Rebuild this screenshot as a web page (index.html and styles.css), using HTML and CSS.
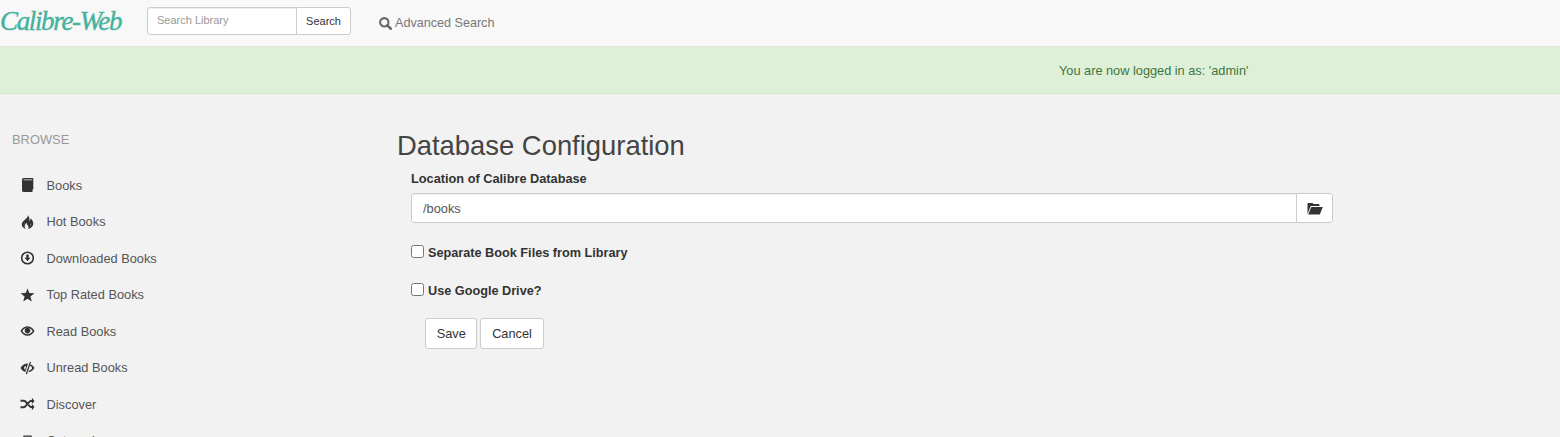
FILE: index.html
```html
<!DOCTYPE html>
<html lang="en">
<head>
<meta charset="utf-8">
<title>Calibre-Web | Database Configuration</title>
<link rel="stylesheet" href="styles.css">
</head>
<body>
<header class="navbar">
  <a class="brand">Calibre-Web</a>
  <form class="search">
    <input class="search-input" type="text" placeholder="Search Library">
    <button class="search-btn" type="button">Search</button>
  </form>
  <a class="adv">
    <svg class="adv-icon" viewBox="0 0 14 14"><circle cx="5.700" cy="5.700" r="4.500" fill="none" stroke="currentColor" stroke-width="2.200"/><path d="M9 9 12.600 12.600" stroke="currentColor" stroke-width="2.800" stroke-linecap="round"/></svg>
    Advanced Search
  </a>
</header>
<div class="alert">You are now logged in as: 'admin'</div>
<div class="page">
  <aside class="sidebar">
    <div class="browse">BROWSE</div>
    <ul class="nav">
      <li><svg class="ic" viewBox="0 0 14 14"><path d="M1.500 1.800C1.500.8 2.200 0 3.200 0H12.800V11.400H11.800V1.600H3.400C2.800 1.600 2.800 2.300 3.400 2.300H12V14H3.200C2.200 14 1.500 13.200 1.500 12.200Z" fill="currentColor"/></svg>Books</li>
      <li><svg class="ic" viewBox="0 0 14 14"><path fill-rule="evenodd" d="M6.800 0C8 2 6 3.300 4.300 4.700 2.300 6.300 1 7.900 1.300 10 1.500 11.700 3 13.200 5.300 14 3.600 11.900 3.700 9.700 6.200 7.400 6 9.200 7.300 10 7.900 11.200 8.300 12.200 8 13.200 7.500 14 10.500 13.400 12.800 11.400 12.800 8.600 12.800 6.100 11.300 4.800 10.200 3.300 10.100 4.800 9.700 5.700 8.900 6.300 9.400 3.800 8.700 1.500 6.800 0ZM4.900 6.700C3.900 7.700 3.200 8.800 3.500 10.200 3.400 8.800 4 7.700 4.900 6.700ZM9.900 8.300C10.400 9.200 10.500 10.300 10 11.200 11 10.400 11 9.300 9.900 8.300Z" fill="currentColor"/></svg>Hot Books</li>
      <li><svg class="ic" viewBox="0 0 14 14"><circle cx="7" cy="7" r="5.800" fill="none" stroke="currentColor" stroke-width="1.600"/><path d="M5.800 3.500H8.200V6.800H10L7 10.300 4 6.800H5.800Z" fill="currentColor"/></svg>Downloaded Books</li>
      <li><svg class="ic" viewBox="0 0 14 14"><path d="M7 .4 8.800 5 13.900 5.300 9.900 8.500 11.300 13.500 7 10.700 2.700 13.500 4.100 8.500.1 5.300 5.200 5Z" fill="currentColor"/></svg>Top Rated Books</li>
      <li><svg class="ic" viewBox="0 0 14 14"><path fill-rule="evenodd" d="M7 2.200C10.300 2.200 12.800 4.600 14 7 12.800 9.400 10.300 11.800 7 11.800S1.200 9.400 0 7C1.200 4.600 3.700 2.200 7 2.200ZM7 3.700C4.700 3.700 2.900 5.200 1.800 7 2.900 8.800 4.700 10.300 7 10.300S11.100 8.800 12.200 7C11.100 5.200 9.300 3.700 7 3.700Z" fill="currentColor"/><circle cx="7" cy="6.600" r="2.800" fill="currentColor"/></svg>Read Books</li>
      <li><svg class="ic" viewBox="0 0 14 14"><path fill-rule="evenodd" d="M7.600 2.500 4.700 11.100C2.700 10.300 1 8.800 0 7 1.300 4.600 3.900 2.500 7.600 2.500ZM5 5C4.100 5.600 3.600 6.200 3.600 7 3.600 7.700 4 8.300 4.600 8.700L5.700 5.400Z" fill="currentColor"/><path d="M9.400 .8 10.600 1.200 6.400 13.200 5.200 12.800Z" fill="currentColor"/><path d="M10 3.300C11.700 4 13.100 5.400 14 7 12.800 9.200 10.700 10.900 8 11.300L8.500 9.700C10 9.300 11 8.300 11.800 7 11.200 5.900 10.400 5.200 9.500 4.800Z" fill="currentColor"/></svg>Unread Books</li>
      <li><svg class="ic" viewBox="0 0 14 14"><path d="M0 2.800H3C4.700 2.800 5.600 3.700 6.500 4.800L7.300 5.800 6 7.300 4.900 6C4.300 5.300 3.800 4.800 3 4.800H0ZM0 9.200H3C3.800 9.200 4.300 8.700 4.900 8L7.100 5.300C8.100 4.100 9 3 10.700 3H11.400V.8L14 3.900 11.400 7V5H10.700C9.900 5 9.400 5.500 8.800 6.200L6.500 9C5.600 10.200 4.700 11.200 3 11.200H0ZM7.300 8.300 8.500 7C9.200 7.900 9.800 9 10.700 9H11.400V7L14 10.100 11.400 13.200V11H10.700C9.100 11 8.200 9.500 7.300 8.300Z" fill="currentColor"/></svg>Discover</li>
      <li><svg class="ic" viewBox="0 0 14 14"><path d="M3 1.500H11L12.500 8V12.500H1.500V8ZM3.900 2.800 3 7.700H11L10.100 2.800Z" fill="currentColor" fill-rule="evenodd"/></svg>Categories</li>
    </ul>
  </aside>
  <main class="main">
    <h2 class="title">Database Configuration</h2>
    <form class="config">
      <label class="field-label" for="db">Location of Calibre Database</label>
      <div class="input-group">
        <input class="path" id="db" type="text" value="/books">
        <button class="browse-btn" type="button" aria-label="Browse">
          <svg class="folder" viewBox="0 0 16 13"><path d="M.5 12V2.300C.5 1.500 1 1 1.800 1H5C5.700 1 6 1.300 6.300 2H11.300C12 2 12.500 2.400 12.500 3.200V4H3.700L.5 12Z" fill="currentColor"/><path d="M4.300 5H15.800L12.800 12.500H1.200Z" fill="currentColor"/></svg>
        </button>
      </div>
      <label class="check first"><input type="checkbox"><span>Separate Book Files from Library</span></label>
      <label class="check second"><input type="checkbox"><span>Use Google Drive?</span></label>
      <div class="actions">
        <button class="btn" type="button">Save</button>
        <button class="btn" type="button">Cancel</button>
      </div>
    </form>
  </main>
</div>
</body>
</html>
```
FILE: styles.css
```css
* { box-sizing: border-box; }
html, body { margin: 0; height: 437px; overflow: hidden; }
body { background: #f2f2f2; color: #444; font-family: "Liberation Sans", Arial, sans-serif; font-size: 12.800px; }
.navbar { display: flex; align-items: flex-start; height: 47px; background: #f8f8f8; border-bottom: 1px solid #e7e7e7; }
.brand { width: 147px; padding-top: 6px; line-height: 30px; font-family: "Liberation Serif", serif; font-style: italic; font-size: 27px; color: #45b29d; white-space: nowrap; letter-spacing: -1.350px; -webkit-text-stroke: .4px #45b29d; }
.search { display: flex; margin-top: 7px; height: 28px; }
.search-input { width: 150px; height: 28px; padding: 0 9px 2px; border: 1px solid #ccc; border-radius: 3px 0 0 3px; background: #fff; font: 11px "Liberation Sans", Arial, sans-serif; box-shadow: inset 0 1px 1px rgba(0,0,0,.075); outline: 0; }
.search-input::placeholder { color: #999; opacity: 1; }
.search-btn { width: 55px; height: 28px; margin-left: -1px; padding: 0; border: 1px solid #ccc; border-radius: 0 3px 3px 0; background: #fff; color: #333; font: 11px "Liberation Sans", Arial, sans-serif; }
.adv { display: flex; align-items: center; gap: 3px; margin: 15px 0 0 28px; height: 16px; color: #777; font-size: 12.600px; white-space: nowrap; }
.adv-icon { width: 13px; height: 13px; color: #666; }
.alert { height: 47px; padding: 16px 0 0 1059px; background: #dff0d8; border-bottom: 1px solid #d6e9c6; color: #3c763d; font-size: 12.750px; line-height: 15px; }
.page { display: flex; }
.sidebar { width: 397px; flex: none; padding: 38px 0 0 12px; }
.browse { color: #999; font-size: 12.900px; line-height: 15px; }
.nav { list-style: none; margin: 20px 0 0; padding: 0 0 0 8px; color: #555; }
.nav li { display: flex; align-items: center; height: 36.500px; white-space: nowrap; }
.ic { width: 15px; height: 14px; margin-right: 11.500px; flex: none; color: #333; }
.main { flex: 1; padding-top: 35px; min-width: 0; }
.title { margin: 0; color: #444; font-weight: 400; font-size: 27.400px; line-height: 34px; }
.config { padding-left: 14px; width: 936px; margin-top: 8px; }
.field-label { display: block; font-weight: 700; font-size: 12.750px; line-height: 16px; color: #333; }
.input-group { display: flex; margin-top: 6px; height: 30px; }
.path { flex: 1; min-width: 0; height: 30px; padding: 0 11px; border: 1px solid #ccc; border-radius: 3px 0 0 3px; background: #fff; color: #555; font: 12.800px "Liberation Sans", Arial, sans-serif; box-shadow: inset 0 1px 1px rgba(0,0,0,.075); outline: 0; }
.browse-btn { display: flex; align-items: center; justify-content: center; width: 37px; height: 30px; margin-left: -1px; padding: 0; border: 1px solid #ccc; border-radius: 0 3px 3px 0; background: #fff; color: #333; }
.folder { width: 16px; height: 13px; }
.check { display: flex; align-items: flex-start; font-weight: 700; font-size: 12.700px; line-height: 16px; color: #333; }
.check input { width: 13px; height: 13px; margin: 0 4px 0 0; }
.first { margin-top: 22px; }
.second { margin-top: 22px; }
.actions { display: flex; gap: 3px; margin-top: 19px; padding-left: 14px; }
.btn { height: 31px; padding: 0 10.700px; border: 1px solid #ccc; border-radius: 3px; background: #fff; color: #333; font: 12.750px "Liberation Sans", Arial, sans-serif; }
```
